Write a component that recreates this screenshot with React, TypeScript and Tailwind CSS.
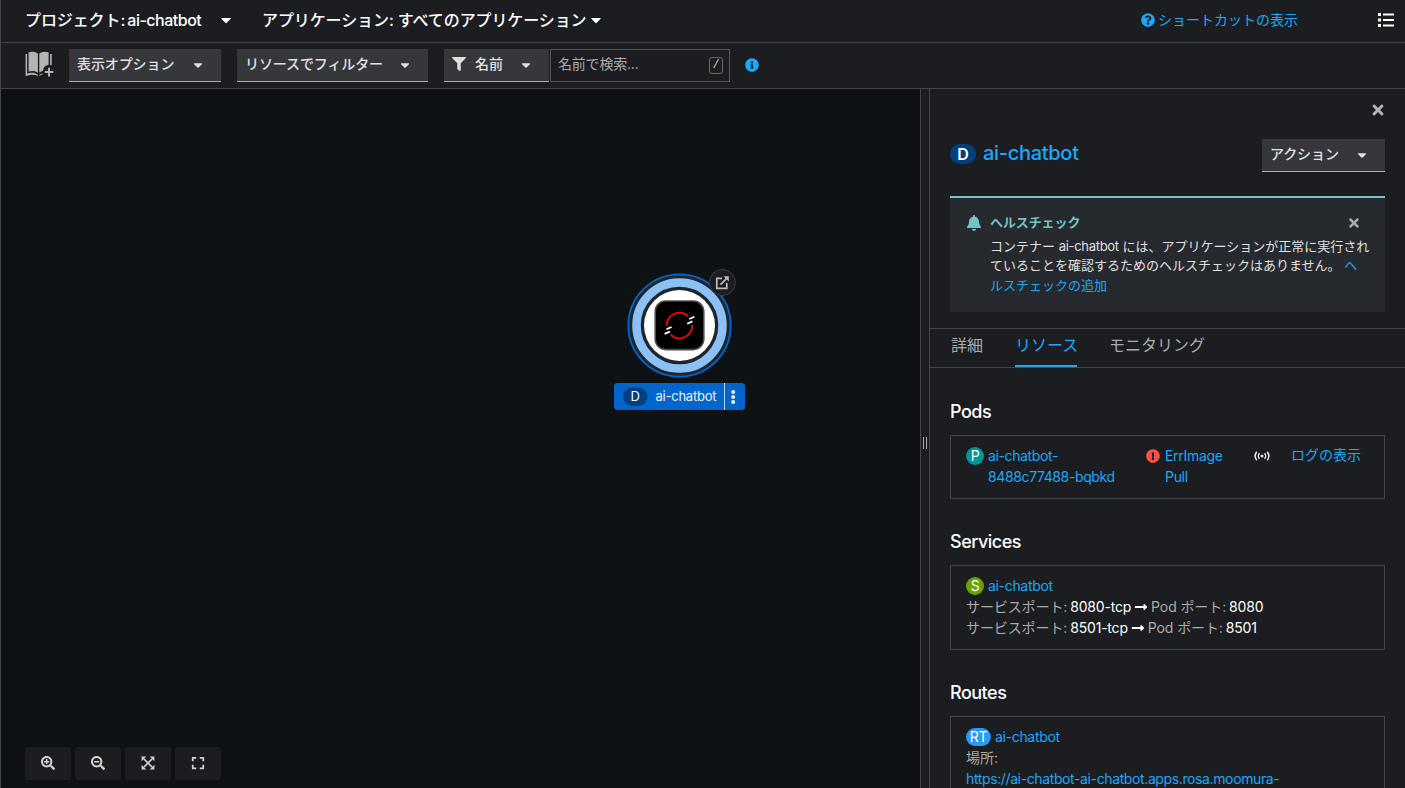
import React, { useState } from "react";
import {
    FaBell,
    FaCaretDown,
    FaExclamationCircle,
    FaFilter,
    FaInfoCircle,
    FaLongArrowAltRight,
    FaQuestionCircle,
    FaSearchMinus,
    FaSearchPlus,
    FaTimes,
    FaExpand,
} from "react-icons/fa";

interface DropdownProps {
    label: string;
    className: string;
    icon?: React.ReactNode;
}

function Dropdown({ label, className, icon }: DropdownProps) {
    return (
        <button className={`flex h-[33px] shrink-0 items-center justify-between border-b border-[#aaabac] bg-[#36373a] pl-2 text-sm font-medium leading-5 text-[#e0e0e0] ${className}`}>
            <span className="flex items-center gap-[9px] whitespace-nowrap pb-[3px] tracking-[-0.1px]">
                {icon}
                {label}
            </span>
            <FaCaretDown className="size-3.5" />
        </button>
    );
}

function BookIcon() {
    return (
        <svg viewBox="0 0 29 27" className="mb-[3px] h-[27px] w-[29px] shrink-0 fill-[#b2b4b6]">
            <path d="M3.6 1.2C7 .2 10.4.6 12.9 2.6v19.2c-2.600-1.900-5.900-2.300-9.300-1.300z" />
            <path d="M14.300 2.600C16.800.6 20.200.2 23.600 1.200v12.600c-3.200.4-5.300 2.600-5.700 5.900-1.300.4-2.500 1-3.600 2.100z" />
            <path d="M.6 3h1.500v19.400c3.800-1.200 7.600-1 10.800 1.400v1.100c-3.400-1.800-7.800-1.500-12.300.3zM25.100 3h1.600v11.200l-1.600-.3zM14.300 24c.9-.8 1.900-1.300 3-1.600l.4 1.200c-1.200.2-2.300.6-3.400 1.300z" />
            <path d="M23 16.800h2v3.300h3.300v2H25v3.300h-2v-3.300h-3.300v-2H23z" />
        </svg>
    );
}

function ListIcon() {
    return (
        <svg viewBox="0 0 16 14" className="h-3.5 w-4 fill-white">
            <path d="M0 0h3v3H0zM5 .5h11v2H5zM0 5.500h3v3H0zM5 6h11v2H5zM0 11h3v3H0zM5 11.500h11v2H5z" />
        </svg>
    );
}

function FitIcon() {
    return (
        <svg viewBox="0 0 14 14" className="size-3.5">
            <path d="M3 3l8 8M11 3l-8 8" stroke="currentColor" strokeWidth="1.700" />
            <path d="M.6.6h4.700L.6 5.300zM13.400.6v4.700L8.700.6zM.6 13.400V8.700l4.700 4.700zM13.400 13.400H8.700l4.700-4.700z" fill="currentColor" />
        </svg>
    );
}

function PortRow({ port, target }: { port: string; target: string }) {
    return (
        <div className="flex h-[21px] items-center whitespace-nowrap tracking-[-0.1px] text-[#aaabac]">
            <span>サービスポート:</span>
            <span className="ml-[3px] tracking-[-0.2px] text-white">{port}</span>
            <FaLongArrowAltRight className="mx-[3px] size-3.5 text-white" />
            <span>Pod ポート:</span>
            <span className="ml-[3px] tracking-[-0.2px] text-white">{target}</span>
        </div>
    );
}

function Section({ title, className, children }: { title: string; className: string; children: React.ReactNode }) {
    return (
        <section>
            <h2 className="h-6 text-[18px] font-medium leading-6 tracking-[-0.5px] text-white">{title}</h2>
            <div className={`mt-[11px] border border-[#444548] px-[15px] pt-[9px] text-sm leading-[21px] ${className}`}>{children}</div>
        </section>
    );
}

function Topology() {
    return (
        <svg viewBox="600 260 160 160" className="absolute left-[599px] top-[171px] size-40">
            <circle cx="679.5" cy="325.500" r="51.200" fill="#20252b" stroke="#0066cc" strokeWidth="1.800" />
            <circle cx="679.5" cy="325.500" r="43" fill="none" stroke="#8bc1f7" strokeWidth="8.500" />
            <circle cx="679.5" cy="325.500" r="35.500" fill="#fff" />
            <rect x="655.2" y="301" width="48.600" height="48.600" rx="10.500" fill="#000" stroke="#4d4d4d" strokeWidth="1.600" />
            <g fill="none" stroke="#ee0000" strokeWidth="1.900">
                <path d="M666.700 325.800A12.700 12.700 0 0 1 688.300 316.500" />
                <path d="M692.100 325A12.700 12.700 0 0 1 670.700 334.700" />
            </g>
            <g stroke="#fff" strokeWidth="1.800">
                <path d="M689.200 319l5.200-2.300M687.200 323.700l5.200-2.300M666.400 329.300l5.200-2.300M664.600 333.900l5.200-2.300" />
            </g>
            <circle cx="722.400" cy="282.500" r="13" fill="#1b1d21" stroke="#393c40" />
            <g fill="none" stroke="#b8babc" strokeWidth="1.700">
                <path d="M722 278.300h-5.200v10h10v-5.200M720.500 284.700l6.500-6.500" />
            </g>
            <path d="M723.500 276.200h5.300v5.300z" fill="#b8babc" />
            <rect x="614" y="383" width="131" height="27" rx="3.500" fill="#0066cc" />
            <rect x="623" y="387.500" width="24.500" height="18.500" rx="9.250" fill="#004080" />
            <text x="635.2" y="401.300" textAnchor="middle" fill="#fff" fontSize="13">D</text>
            <text x="655.5" y="401.200" textLength="61" fill="#f0f0f0" fontSize="13">ai-chatbot</text>
            <path d="M724.5 383v27" stroke="#b8d4f0" />
            <g fill="#f0f0f0">
                <circle cx="733.2" cy="391.900" r="2" />
                <circle cx="733.2" cy="397" r="2" />
                <circle cx="733.2" cy="402.100" r="2" />
            </g>
        </svg>
    );
}

const controls = [
    { name: "zoom-in", icon: <FaSearchPlus className="size-3.5" /> },
    { name: "zoom-out", icon: <FaSearchMinus className="size-3.5" /> },
    { name: "fit", icon: <FitIcon /> },
    { name: "reset", icon: <FaExpand className="size-3.5" /> },
];

const tabs = ["詳細", "リソース", "モニタリング"];

function SidePanel() {
    const [activeTab, setActiveTab] = useState("リソース");

    return (
        <aside className="w-[475px] shrink-0 overflow-hidden">
            <div className="flex h-[50px] justify-end pr-5 pt-[13px]">
                <FaTimes className="h-4 w-3.5 text-[#b4b5b7]" />
            </div>
            <div className="flex justify-between px-5">
                <h1 className="flex h-[30px] items-center text-xl font-medium leading-[30px] text-[#1fa7f8]">
                    <span className="mr-[7px] flex h-5 w-[26px] items-center justify-center rounded-full bg-[#004080] text-base font-semibold leading-5 text-white">D</span>
                    <span className="pb-0.5 tracking-[-0.3px]">ai-chatbot</span>
                </h1>
                <Dropdown label="アクション" className="w-[123px] pr-4" />
            </div>

            <div className="mx-5 mt-6 flex h-[116px] border-t-2 border-[#73c5c5] bg-[#26292d] pl-4 pt-[15px] text-[13px]">
                <FaBell className="mr-2 mt-0.5 h-4 w-4 shrink-0 text-[#73c5c5]" />
                <div className="w-[380px] leading-[19.5px]">
                    <div className="flex items-center justify-between">
                        <h4 className="font-bold tracking-[-0.1px] text-[#73c5c5]">ヘルスチェック</h4>
                        <FaTimes className="mr-[9px] size-3.5 text-[#aaabac]" />
                    </div>
                    <p className="mt-1 whitespace-nowrap text-[#e0e0e0]">
                        コンテナー <span className="tracking-[-0.3px]">ai-chatbot</span> には、アプリケーションが正常に実行され
                        <br />
                        ていることを確認するためのヘルスチェックはありません。 <a className="text-[#1fa7f8]">ヘ<br />ルスチェックの追加</a>
                    </p>
                </div>
            </div>

            <div className="mt-4 flex h-10 gap-8 border-y border-[#444548] px-[21px]">
                {tabs.map((tab) => (
                    <button
                        key={tab}
                        onClick={() => setActiveTab(tab)}
                        className={`h-[38px] whitespace-nowrap border-b-2 pb-[5px] text-base leading-6 ${activeTab === tab ? "w-[62px] border-[#1fa7f8] text-[#1fa7f8]" : "border-transparent text-[#aaabac]"}`}
                    >
                        {tab}
                    </button>
                ))}
            </div>

            <div className="flex flex-col gap-[31px] px-5 pt-8">
                <Section title="Pods" className="h-16">
                    <div className="flex tracking-[-0.38px] text-[#1fa7f8]">
                        <span className="mr-[4px] mt-0.5 flex size-[18px] items-center justify-center rounded-full bg-[#009596] leading-[18px] text-white">P</span>
                        <div className="w-[158px]">ai-chatbot-<br />8488c77488-bqbkd</div>
                        <FaExclamationCircle className="mr-[5px] mt-1 size-3.5 text-[#fe5142]" />
                        <div className="w-[89px] tracking-[-0.3px]">ErrImage<br />Pull</div>
                        <svg viewBox="0 0 16 12" className="mt-[5px] h-3 w-4 shrink-0 fill-none stroke-[#e8e8e8]">
                            <circle cx="8" cy="6" r="1.500" className="fill-[#e8e8e8] stroke-none" />
                            <path d="M5.500 3.200a4 4 0 0 0 0 5.600M10.500 3.200a4 4 0 0 1 0 5.600M2.800 1.700a7 7 0 0 0 0 8.600M13.200 1.700a7 7 0 0 1 0 8.600" strokeWidth="1.500" />
                        </svg>
                        <a className="ml-[21px] -mt-px whitespace-nowrap tracking-normal">ログの表示</a>
                    </div>
                </Section>
                <Section title="Services" className="h-[85px]">
                    <div className="flex tracking-[-0.32px] text-[#1fa7f8]">
                        <span className="mr-[4px] mt-0.5 flex size-[18px] items-center justify-center rounded-full bg-[#6ca100] leading-[18px] text-white">S</span>
                        ai-chatbot
                    </div>
                    <PortRow port="8080-tcp" target="8080" />
                    <PortRow port="8501-tcp" target="8501" />
                </Section>
                <Section title="Routes" className="h-[100px]">
                    <div className="flex tracking-[-0.32px] text-[#1fa7f8]">
                        <span className="mr-[4px] mt-0.5 flex h-[18px] w-[25px] items-center justify-center rounded-full bg-[#2b9af3] leading-[18px] text-white">RT</span>
                        ai-chatbot
                    </div>
                    <div className="text-[#aaabac]">場所:</div>
                    <a className="whitespace-nowrap tracking-[-0.38px] text-[#1fa7f8]">https://ai-chatbot-ai-chatbot.apps.rosa.moomura-</a>
                </Section>
            </div>
        </aside>
    );
}

export default function App() {
    return (
        <div className="flex h-[788px] w-[1405px] flex-col overflow-hidden border-l border-[#444548] bg-[#1b1d21] font-['Inter','Noto_Sans_CJK_JP',sans-serif]">
            <header className="flex h-[43px] shrink-0 items-center border-b border-[#444548] pb-0.5 text-base text-white">
                <span className="ml-6 w-[193px] whitespace-nowrap font-medium tracking-[-0.1px]">プロジェクト: <span className="-ml-0.5 tracking-[-0.5px]">ai-chatbot</span></span>
                <FaCaretDown className="size-4" />
                <span className="ml-7 w-[326px] whitespace-nowrap font-medium tracking-[-0.1px]">アプリケーション: すべてのアプリケーション</span>
                <FaCaretDown className="size-4" />
                <a className="ml-auto mr-20 flex items-center gap-[3px] text-sm text-[#1fa7f8]">
                    <FaQuestionCircle className="size-3.5" />
                    ショートカットの表示
                </a>
                <span className="mr-[11px]">
                    <ListIcon />
                </span>
            </header>

            <div className="flex h-[46px] shrink-0 items-center border-b border-[#444548] pl-6">
                <BookIcon />
                <Dropdown label="表示オプション" className="ml-[15px] w-[152px] pr-4" />
                <Dropdown label="リソースでフィルター" className="ml-4 w-[191px] pr-4" />
                <Dropdown label="名前" className="ml-4 w-[105px] pr-4" icon={<FaFilter className="size-3.5" />} />
                <div className="ml-px flex h-[33px] w-[180px] items-center justify-between border border-[#57585b] pl-[7px] pr-1.5 text-sm text-[#aaabac]">
                    <span className="pb-[3px] tracking-[-0.2px]">名前で検索...</span>
                    <kbd className="mb-px flex h-[17px] w-3.5 items-center justify-center rounded-[3px] border border-[#66676a] text-xs text-[#d0d0d0]">/</kbd>
                </div>
                <FaInfoCircle className="mb-0.5 ml-[15px] size-3.5 text-[#1fa7f8]" />
            </div>

            <main className="flex min-h-0 flex-1">
                <div className="relative flex flex-1 flex-col justify-end bg-[#0f1214] pb-2 pl-6">
                    <Topology />
                    <div className="flex gap-1">
                        {controls.map((c) => (
                            <button key={c.name} className="flex h-[33px] w-[46px] items-center justify-center rounded-[3px] bg-[#1b1d21] pb-0.5 text-[#d2d2d2]">
                                {c.icon}
                            </button>
                        ))}
                    </div>
                </div>
                <div className="flex w-2.5 shrink-0 items-center justify-center border-x border-[#444548]">
                    <span className="mt-2 h-3 w-1 border-x border-[#aaabac]" />
                </div>
                <SidePanel />
            </main>
        </div>
    );
}
